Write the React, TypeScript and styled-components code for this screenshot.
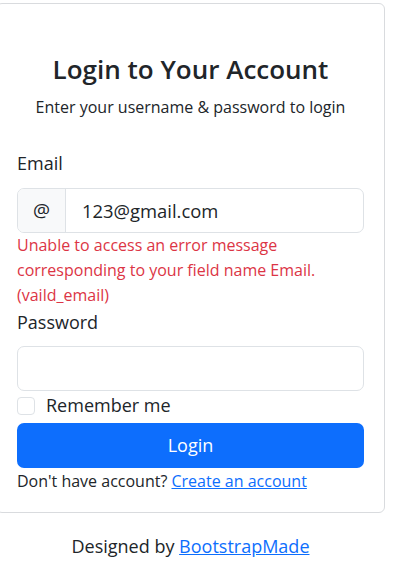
import React from "react";
import styled, { createGlobalStyle } from "styled-components";

const GlobalStyle = createGlobalStyle`
  html, body { margin: 0; padding: 0; background: #fff; }
  body {
    font-family: "Open Sans", "Noto Sans", sans-serif;
    color: #212529;
    -webkit-font-smoothing: antialiased;
  }
  * { box-sizing: border-box; }
`;

const Page = styled.div`
  width: 389px;
  margin-left: -4px;
  padding-top: 3px;
`;

const Card = styled.div`
  border: 1px solid #d9dbde;
  border-radius: 6px;
  background: #fff;
  padding: 49.5px 20px 19px;
`;

const Header = styled.div`
  display: flex;
  flex-direction: column;
  align-items: center;
  margin-bottom: 31px;
`;

const Title = styled.h1`
  margin: 0 0 10.5px;
  font-size: 26px;
  line-height: 1.2;
  font-weight: 600;
  color: #212529;
`;

const Subtitle = styled.p`
  margin: 0;
  font-size: 16px;
  line-height: 24px;
`;

const Form = styled.form`
  display: flex;
  flex-direction: column;
`;

const Label = styled.label`
  display: block;
  font-size: 18px;
  line-height: 27px;
  margin-bottom: 10.5px;
`;

const InputGroup = styled.div`
  display: flex;
  height: 45px;
  border: 1px solid #dee2e6;
  border-radius: 7px;
  overflow: hidden;
  background: #fff;
`;

const Addon = styled.span`
  display: flex;
  align-items: center;
  padding: 0 15px 0 15px;
  background: #f8f9fa;
  border-right: 1px solid #dee2e6;
  font-size: 19px;
`;

const Input = styled.input`
  flex: 1;
  min-width: 0;
  border: none;
  outline: none;
  background: transparent;
  padding: 0 16px;
  font-family: inherit;
  font-size: 18.4px;
  color: #212529;
`;

const Feedback = styled.div`
  color: #dc3545;
  font-size: 16px;
  line-height: 25px;
  margin-bottom: 1px;
`;

const CheckRow = styled.label`
  display: flex;
  align-items: center;
  gap: 11px;
  margin-top: 1px;
  font-size: 18px;
  line-height: 27px;
`;

const Check = styled.input`
  appearance: none;
  margin: 0;
  width: 18px;
  height: 18px;
  border: 1px solid #dee2e6;
  border-radius: 4px;
  background: #fff;
`;

const Button = styled.button`
  margin-top: 3.5px;
  height: 45px;
  border: none;
  border-radius: 7px;
  background: #0d6efd;
  color: #fff;
  font-family: inherit;
  font-size: 18px;
  cursor: pointer;
`;

const Note = styled.p`
  margin: 1px 0 0;
  font-size: 16px;
  line-height: 24px;
`;

const Link = styled.a`
  color: #0d6efd;
  text-decoration: underline;
`;

const Footer = styled.div`
  margin-top: 20.5px;
  text-align: center;
  font-size: 18px;
  line-height: 27px;
`;

export default function App() {
  return (
    <>
      <GlobalStyle />
      <Page>
        <Card>
          <Header>
            <Title>Login to Your Account</Title>
            <Subtitle>Enter your username &amp; password to login</Subtitle>
          </Header>
          <Form onSubmit={(e) => e.preventDefault()}>
            <Label htmlFor="email">Email</Label>
            <InputGroup>
              <Addon>@</Addon>
              <Input id="email" type="text" defaultValue="123@gmail.com" />
            </InputGroup>
            <Feedback>
              Unable to access an error message corresponding to your field name Email.
              (vaild_email)
            </Feedback>
            <Label htmlFor="password">Password</Label>
            <InputGroup>
              <Input id="password" type="password" />
            </InputGroup>
            <CheckRow>
              <Check type="checkbox" />
              Remember me
            </CheckRow>
            <Button type="submit">Login</Button>
            <Note>
              Don't have account? <Link href="#">Create an account</Link>
            </Note>
          </Form>
        </Card>
        <Footer>
          Designed by <Link href="#">BootstrapMade</Link>
        </Footer>
      </Page>
    </>
  );
}
